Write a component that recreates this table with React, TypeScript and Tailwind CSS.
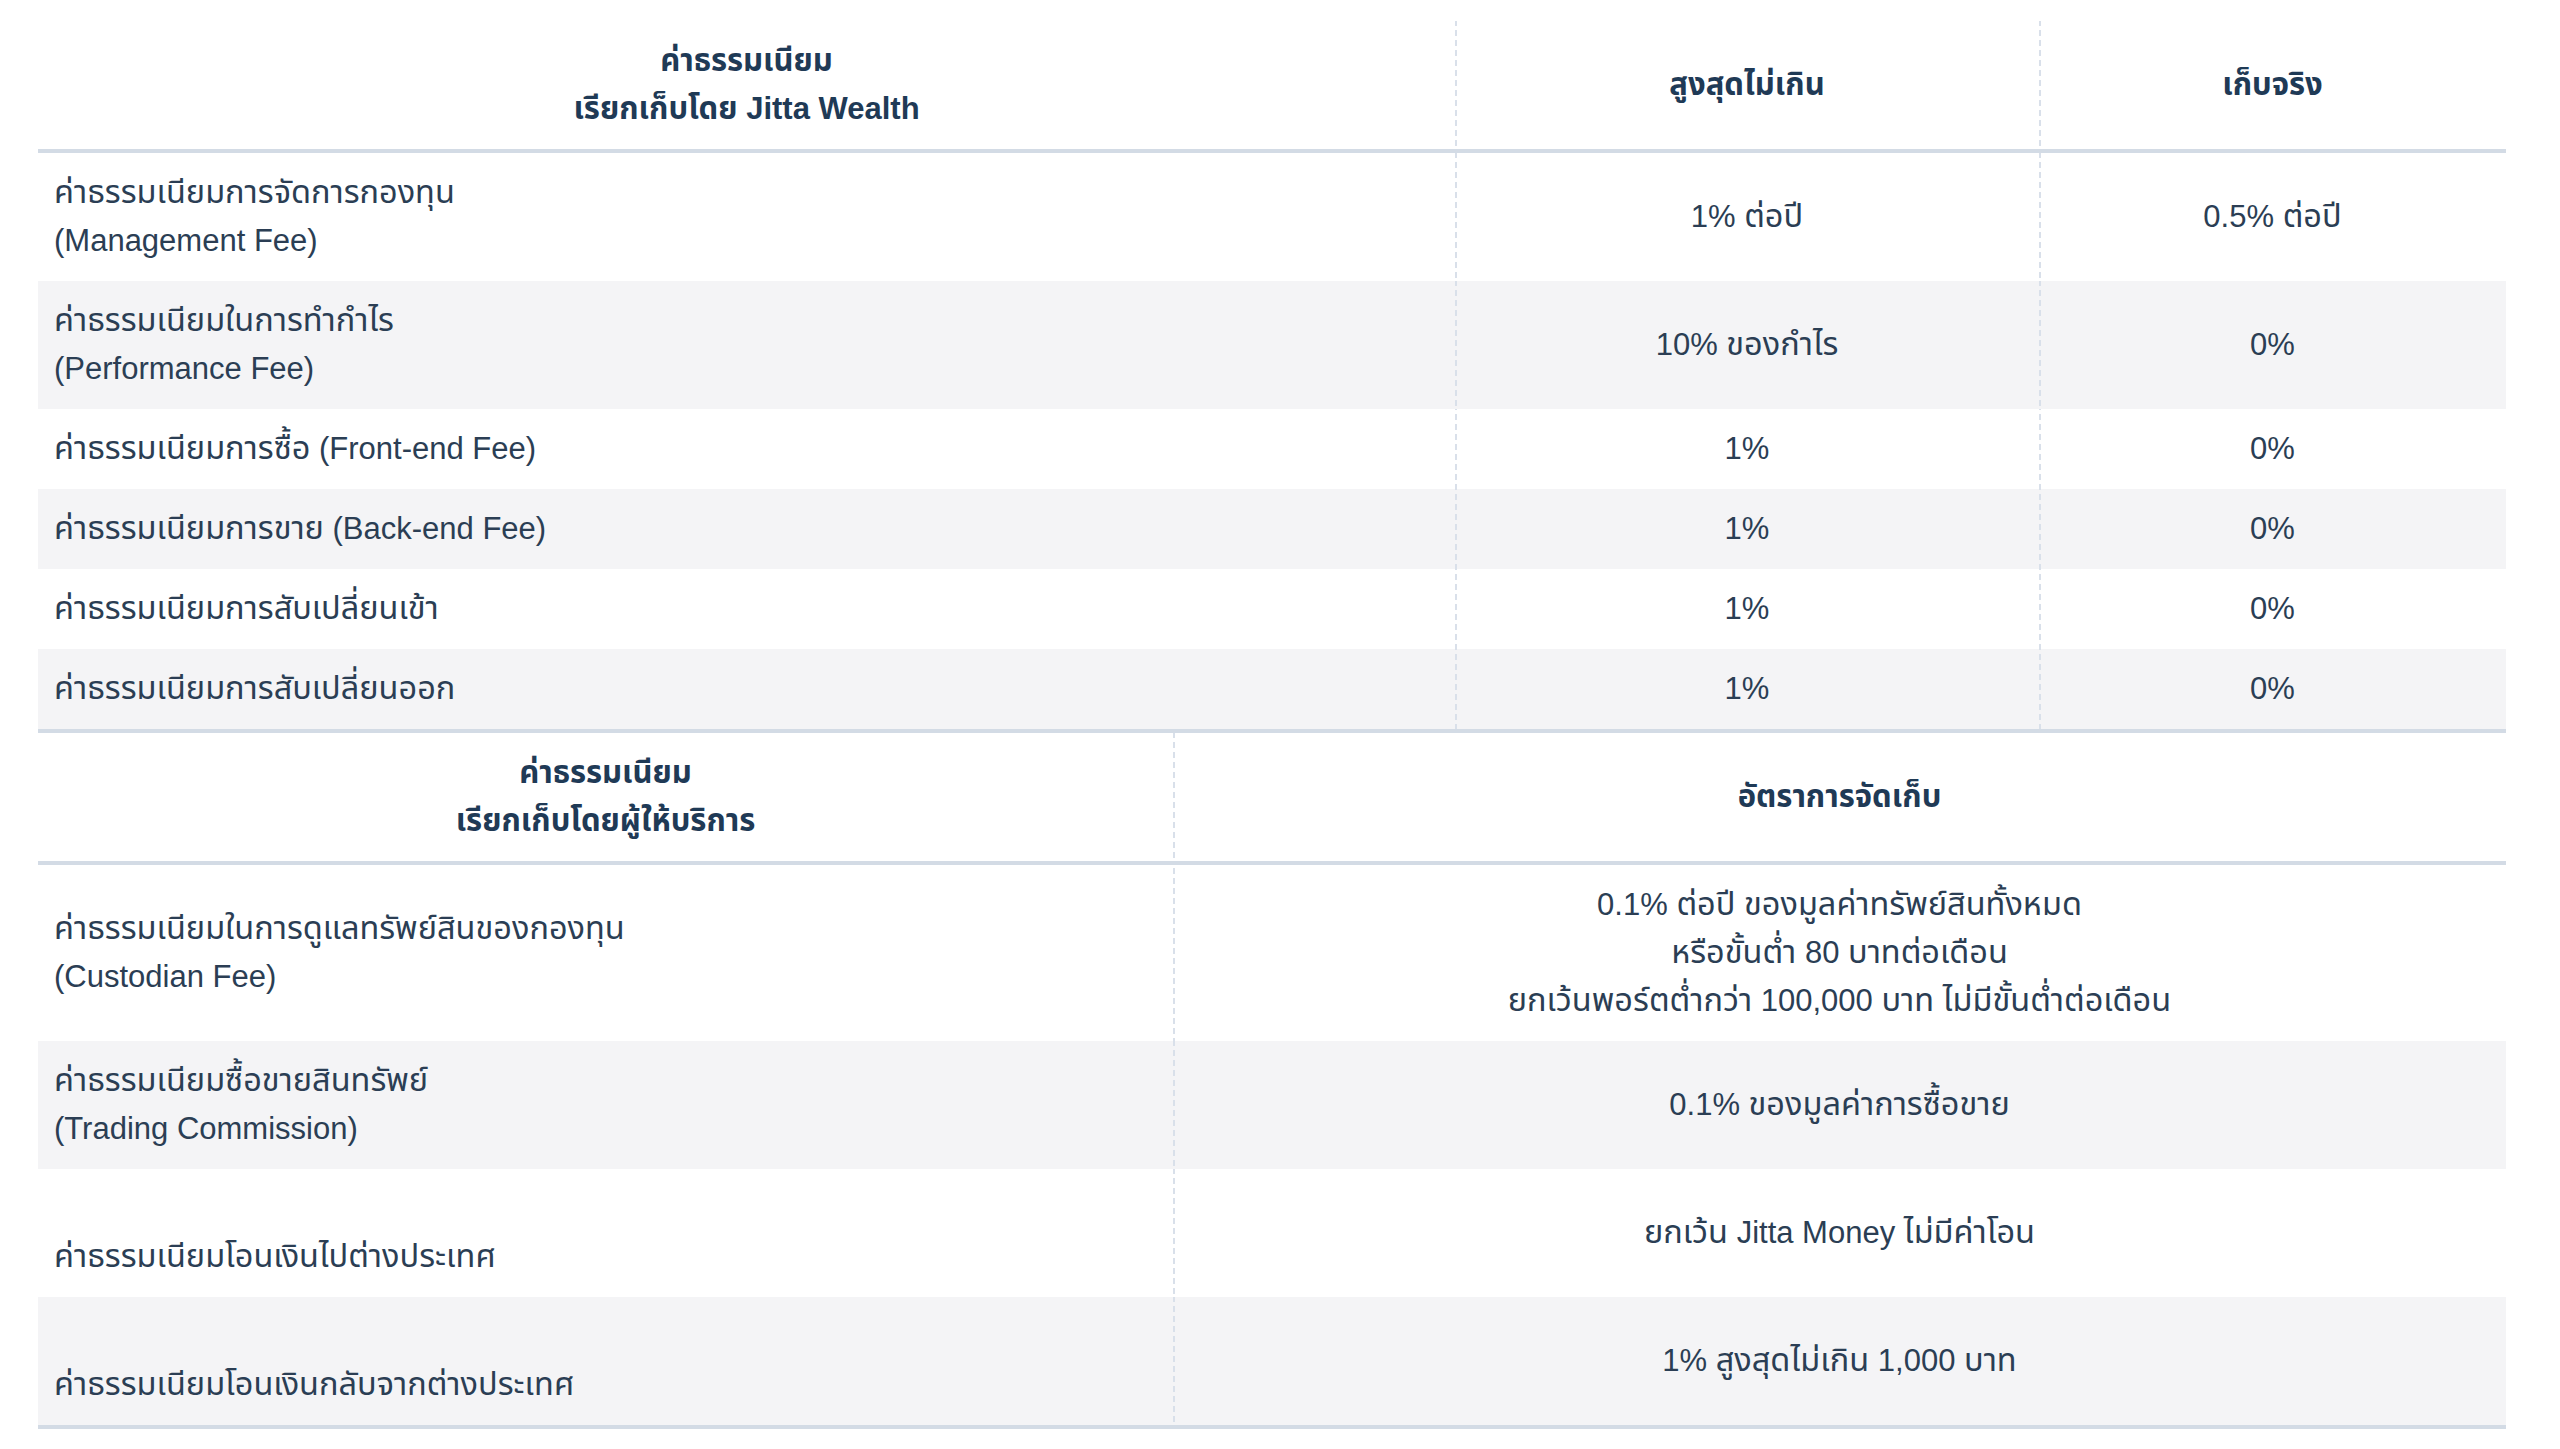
const dash =
  "bg-[linear-gradient(to_bottom,#d9e0ea_6px,transparent_6px)] bg-[length:2px_10px] bg-repeat-y bg-left";

const jittaRows = [
  { label: ["ค่าธรรมเนียมการจัดการกองทุน", "(Management Fee)"], max: "1% ต่อปี", actual: "0.5% ต่อปี" },
  { label: ["ค่าธรรมเนียมในการทำกำไร", "(Performance Fee)"], max: "10% ของกำไร", actual: "0%" },
  { label: ["ค่าธรรมเนียมการซื้อ (Front-end Fee)"], max: "1%", actual: "0%" },
  { label: ["ค่าธรรมเนียมการขาย (Back-end Fee)"], max: "1%", actual: "0%" },
  { label: ["ค่าธรรมเนียมการสับเปลี่ยนเข้า"], max: "1%", actual: "0%" },
  { label: ["ค่าธรรมเนียมการสับเปลี่ยนออก"], max: "1%", actual: "0%" },
];

const providerRows = [
  {
    label: ["ค่าธรรมเนียมในการดูแลทรัพย์สินของกองทุน", "(Custodian Fee)"],
    rate: [
      "0.1% ต่อปี ของมูลค่าทรัพย์สินทั้งหมด",
      "หรือขั้นต่ำ 80 บาทต่อเดือน",
      "ยกเว้นพอร์ตต่ำกว่า 100,000 บาท ไม่มีขั้นต่ำต่อเดือน",
    ],
  },
  { label: ["ค่าธรรมเนียมซื้อขายสินทรัพย์", "(Trading Commission)"], rate: ["0.1% ของมูลค่าการซื้อขาย"] },
  { label: ["\u00a0", "ค่าธรรมเนียมโอนเงินไปต่างประเทศ"], rate: ["ยกเว้น Jitta Money ไม่มีค่าโอน"] },
  { label: ["\u00a0", "ค่าธรรมเนียมโอนเงินกลับจากต่างประเทศ"], rate: ["1% สูงสุดไม่เกิน 1,000 บาท"] },
];

// the thai face runs a little narrower than the reference, so thai runs get a touch more size
function Th({ text }: { text: string }) {
  const parts = text.split(/([\u0E00-\u0E7F]+)/);
  return (
    <span>
      {parts.map((p, i) =>
        /[\u0E00-\u0E7F]/.test(p) ? (
          <span key={i} className="text-[32.5px] leading-[0]">
            {p}
          </span>
        ) : (
          p
        ),
      )}
    </span>
  );
}

function Lines({ lines }: { lines: string[] }) {
  return (
    <>
      {lines.map((l, i) => (
        <div key={i} className="h-12">
          <Th text={l} />
        </div>
      ))}
    </>
  );
}

export default function App() {
  return (
    <div
      className="min-h-screen bg-white text-[31px] leading-[48px] text-[#2b3e54]"
      style={{ fontFamily: '"Liberation Sans", "Noto Sans Thai", "Noto Sans", sans-serif' }}
    >
      <div className="ml-[38px] w-[2468px] pt-[21px]">
        {/* fees by Jitta Wealth */}
        <div className="grid grid-cols-[1417px_584px_467px]">
          <div className="border-b-4 border-[#d3dbe5] py-4 text-center font-bold text-[#1f3a56]">
            <div>ค่าธรรมเนียม</div>
            <div>เรียกเก็บโดย Jitta Wealth</div>
          </div>
          <div className={`flex items-center justify-center border-b-4 border-[#d3dbe5] font-bold text-[#1f3a56] ${dash}`}>
            สูงสุดไม่เกิน
          </div>
          <div className={`flex items-center justify-center border-b-4 border-[#d3dbe5] font-bold text-[#1f3a56] ${dash}`}>
            เก็บจริง
          </div>
          {jittaRows.map((r, i) => {
            const bg = i % 2 === 1 ? "bg-[#f4f4f6]" : "bg-white";
            return (
              <div key={i} className="contents">
                <div className={`py-4 pl-4 ${bg}`}>
                  <Lines lines={r.label} />
                </div>
                <div className={`flex items-center justify-center ${bg} ${dash}`}>
                  <Th text={r.max} />
                </div>
                <div className={`flex items-center justify-center ${bg} ${dash}`}>
                  <Th text={r.actual} />
                </div>
              </div>
            );
          })}
        </div>

        {/* fees by service providers */}
        <div className="grid grid-cols-[1135px_1333px] border-t-4 border-[#d3dbe5]">
          <div className="border-b-4 border-[#d3dbe5] py-4 text-center font-bold text-[#1f3a56]">
            <div>ค่าธรรมเนียม</div>
            <div>เรียกเก็บโดยผู้ให้บริการ</div>
          </div>
          <div className={`flex items-center justify-center border-b-4 border-[#d3dbe5] font-bold text-[#1f3a56] ${dash}`}>
            อัตราการจัดเก็บ
          </div>
          {providerRows.map((r, i) => {
            const bg = i % 2 === 1 ? "bg-[#f4f4f6]" : "bg-white";
            const last = i === providerRows.length - 1 ? "border-b-4 border-[#d3dbe5]" : "";
            return (
              <div key={i} className="contents">
                <div className={`flex flex-col justify-center py-4 pl-4 ${bg} ${last}`}>
                  <Lines lines={r.label} />
                </div>
                <div className={`flex flex-col items-center justify-center py-4 text-center ${bg} ${dash} ${last}`}>
                  <Lines lines={r.rate} />
                </div>
              </div>
            );
          })}
        </div>
      </div>
    </div>
  );
}
